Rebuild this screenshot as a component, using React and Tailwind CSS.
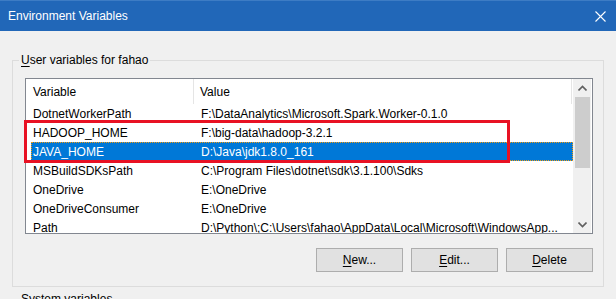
import React from "react";

const rows = [
  { name: "DotnetWorkerPath", value: "F:\\DataAnalytics\\Microsoft.Spark.Worker-0.1.0" },
  { name: "HADOOP_HOME", value: "F:\\big-data\\hadoop-3.2.1" },
  { name: "JAVA_HOME", value: "D:\\Java\\jdk1.8.0_161", selected: true },
  { name: "MSBuildSDKsPath", value: "C:\\Program Files\\dotnet\\sdk\\3.1.100\\Sdks" },
  { name: "OneDrive", value: "E:\\OneDrive" },
  { name: "OneDriveConsumer", value: "E:\\OneDrive" },
  { name: "Path", value: "D:\\Python\\;C:\\Users\\fahao\\AppData\\Local\\Microsoft\\WindowsApp..." },
];

const Chevron = ({ down }) => (
  <svg width="9" height="6" viewBox="0 0 9 6" className={down ? "rotate-180" : ""}>
    <path d="M0.5 5.5 L4.5 1.5 L8.5 5.5" fill="none" stroke="#606060" strokeWidth="1.6" />
  </svg>
);

const Button = ({ hot, rest }) => (
  <button className="w-[87px] h-[24px] border border-[#adadad] bg-[#e1e1e1] text-[12px] text-black">
    <span className="underline underline-offset-2">{hot}</span>
    {rest}
  </button>
);

export default function App() {
  return (
    <div
      className="w-[616px] h-[299px] overflow-hidden bg-[#f0f0f0] text-[12px] text-black"
      style={{ fontFamily: '"Segoe UI", "Liberation Sans", Arial, sans-serif' }}
    >
      {/* title bar */}
      <div className="h-[31px] bg-[#2167b8] border-t border-[#3d7cc4] flex items-center justify-between pl-[8px] pr-[10px]">
        <span className="text-white text-[12px]">Environment Variables</span>
        <svg width="11" height="11" viewBox="0 0 11 11">
          <path d="M0.5 0.5 L10.5 10.5 M10.5 0.5 L0.5 10.5" stroke="#fff" strokeWidth="1.1" />
        </svg>
      </div>

      <fieldset className="ml-[12px] mt-[22px] w-[592px] h-[234px] border border-[#dcdcdc] pl-[12px] pr-[10px] pt-[10px]">
        <legend className="-ml-[6px] px-[2px] leading-[15px]">
          <span className="underline underline-offset-2">U</span>ser variables for fahao
        </legend>

        <div className="relative">
          <div className="w-[568px] h-[156px] border border-[#828790] bg-white flex overflow-hidden">
            <div className="w-[547px] flex flex-col">
              <div className="h-[25px] flex items-center shrink-0">
                <div className="w-[168px] h-full pl-[7px] flex items-center border-r border-[#e5e5e5]">Variable</div>
                <div className="w-[378px] h-full pl-[6px] flex items-center border-r border-[#e5e5e5]">Value</div>
              </div>
              {rows.map((r) => (
                <div
                  key={r.name}
                  className={`h-[19px] shrink-0 flex items-center ml-[5px] ${
                    r.selected ? "bg-[#0078d7] text-white outline outline-1 outline-dotted outline-[#f39c12] -outline-offset-1" : ""
                  }`}
                >
                  <div className="w-[164px] pl-[2px] whitespace-nowrap">{r.name}</div>
                  <div className="pl-[6px] whitespace-nowrap">{r.value}</div>
                </div>
              ))}
            </div>
            <div className="w-[18px] bg-[#f0f0f0] flex flex-col items-center">
              <div className="h-[18px] flex items-center justify-center shrink-0">
                <Chevron />
              </div>
              <div className="w-[15px] h-[71px] bg-[#cdcdcd]" />
              <div className="flex-1" />
              <div className="h-[17px] flex items-center justify-center shrink-0">
                <Chevron down />
              </div>
            </div>
          </div>
          {/* annotation box */}
          <div className="absolute left-[-1px] top-[42px] w-[486px] h-[43px] border-[3px] border-[#e81123]" />
        </div>

        <div className="flex justify-end gap-[8px] mt-[14px]">
          <Button hot="N" rest="ew..." />
          <Button hot="E" rest="dit..." />
          <Button hot="D" rest="elete" />
        </div>
      </fieldset>

      <div className="pl-[21px] mt-[3px]">
        <span className="underline underline-offset-2">S</span>ystem variables
      </div>
    </div>
  );
}
